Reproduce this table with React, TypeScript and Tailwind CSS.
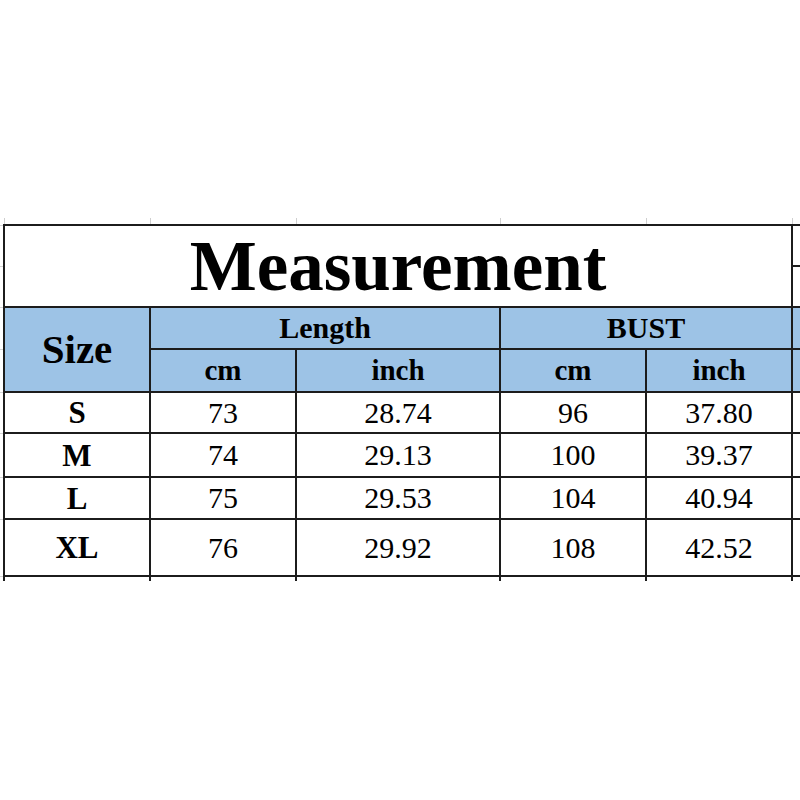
const rows = [
  { size: "S", lcm: "73", lin: "28.74", bcm: "96", bin: "37.80", h: "h-[41px]" },
  { size: "M", lcm: "74", lin: "29.13", bcm: "100", bin: "39.37", h: "h-[44px]" },
  { size: "L", lcm: "75", lin: "29.53", bcm: "104", bin: "40.94", h: "h-[42px]" },
  { size: "XL", lcm: "76", lin: "29.92", bcm: "108", bin: "42.52", h: "h-[57px]" },
];

const cell = "border-2 border-[#1c1c1c] p-0 text-center align-middle leading-none";
const head = `${cell} bg-[#9dc3e6] font-bold`;
const gutter = "border-y border-[#d4d4d4] p-0";
const strip = "border-y-2 border-[#1c1c1c] border-l-2 p-0";

export default function App() {
  return (
    <div className="h-[800px] w-[800px] overflow-hidden bg-white pt-[218px] font-['Liberation_Serif',serif] text-black">
      <table className="w-[812px] table-fixed border-collapse">
        <colgroup>
          <col className="w-[4px]" />
          <col className="w-[146px]" />
          <col className="w-[146px]" />
          <col className="w-[204px]" />
          <col className="w-[146px]" />
          <col className="w-[146px]" />
          <col className="w-[20px]" />
        </colgroup>
        <tbody>
          {/* gridline ticks above the table */}
          <tr className="h-[7px]">
            <td className="p-0" />
            {[0, 1, 2, 3, 4].map((i) => (
              <td key={i} className="border-x border-[#cfcfcf] p-0" />
            ))}
            <td className="p-0" />
          </tr>

          {/* title */}
          <tr className="h-[41px]">
            <td className={gutter} />
            <td colSpan={5} rowSpan={2} className={`${cell} text-[71px] font-bold`}>
              Measurement
            </td>
            <td className={strip} />
          </tr>
          <tr className="h-[41px]">
            <td className={gutter} />
            <td className={strip} />
          </tr>

          {/* header */}
          <tr className="h-[42px]">
            <td className={gutter} />
            <td rowSpan={2} className={`${head} text-[41px]`}>
              Size
            </td>
            <td colSpan={2} className={`${head} text-[30px]`}>
              Length
            </td>
            <td colSpan={2} className={`${head} text-[30px]`}>
              BUST
            </td>
            <td className={`${strip} bg-[#9dc3e6]`} />
          </tr>
          <tr className="h-[43px]">
            <td className={gutter} />
            <td className={`${head} text-[29px]`}>cm</td>
            <td className={`${head} text-[29px]`}>inch</td>
            <td className={`${head} text-[29px]`}>cm</td>
            <td className={`${head} text-[29px]`}>inch</td>
            <td className={`${strip} bg-[#9dc3e6]`} />
          </tr>

          {/* data */}
          {rows.map((r) => (
            <tr key={r.size} className={r.h}>
              <td className={gutter} />
              <td className={`${cell} text-[31px] font-bold`}>{r.size}</td>
              <td className={`${cell} text-[30px]`}>{r.lcm}</td>
              <td className={`${cell} text-[30px]`}>{r.lin}</td>
              <td className={`${cell} text-[30px]`}>{r.bcm}</td>
              <td className={`${cell} text-[30px]`}>{r.bin}</td>
              <td className={strip} />
            </tr>
          ))}

          {/* lines running past the bottom edge */}
          <tr className="h-[5px]">
            <td className="p-0" />
            {[0, 1, 2, 3, 4].map((i) => (
              <td key={i} className="border-x-2 border-[#1c1c1c] p-0" />
            ))}
            <td className="p-0" />
          </tr>
        </tbody>
      </table>
    </div>
  );
}
